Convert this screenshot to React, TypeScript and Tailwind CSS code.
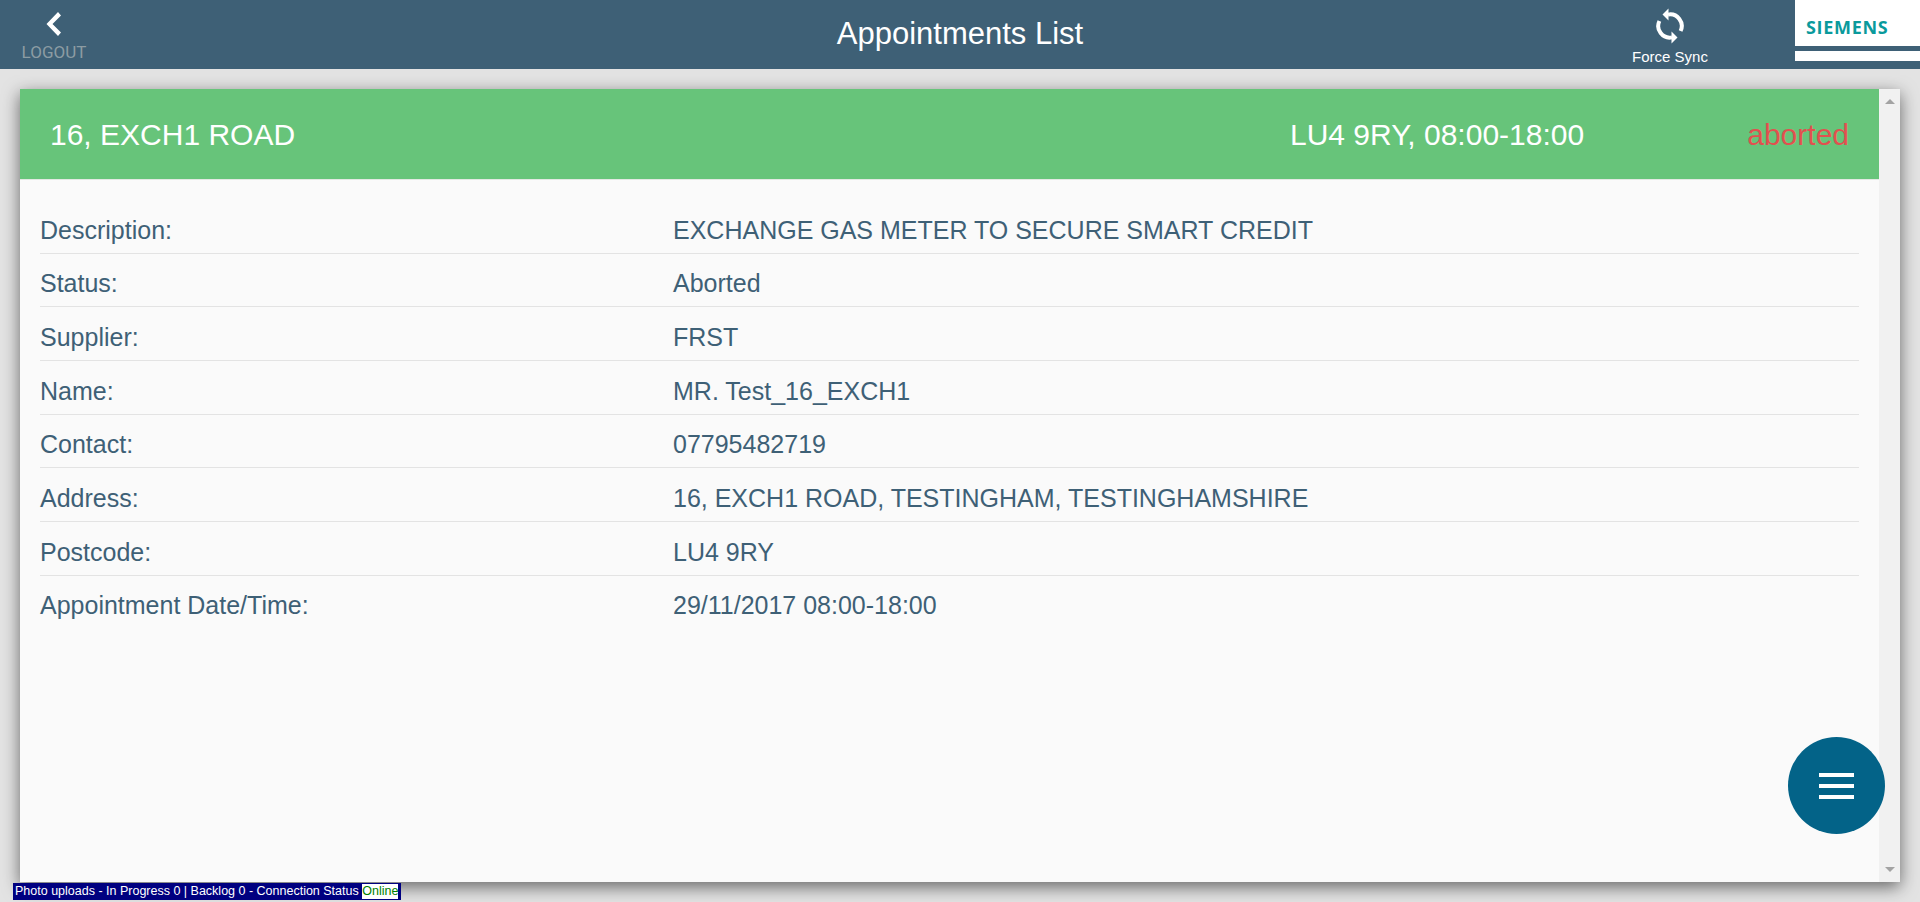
const rows = [
  ["Description:", "EXCHANGE GAS METER TO SECURE SMART CREDIT"],
  ["Status:", "Aborted"],
  ["Supplier:", "FRST"],
  ["Name:", "MR. Test_16_EXCH1"],
  ["Contact:", "07795482719"],
  ["Address:", "16, EXCH1 ROAD, TESTINGHAM, TESTINGHAMSHIRE"],
  ["Postcode:", "LU4 9RY"],
  ["Appointment Date/Time:", "29/11/2017 08:00-18:00"],
];

function SyncIcon() {
  return (
    <svg viewBox="0 0 28 36" className="h-[36px] w-[28px]" fill="none">
      <path d="M12 6.6 A11.6 11.6 0 0 1 24.6 23" stroke="white" strokeWidth="4" />
      <path d="M16 29.4 A11.6 11.6 0 0 1 3.4 13" stroke="white" strokeWidth="4" />
      <path d="M12.5 0.5 L6.5 6.5 L12.5 12.5 Z" fill="white" />
      <path d="M15.5 23.5 L21.5 29.5 L15.5 35.5 Z" fill="white" />
    </svg>
  );
}

function BackIcon() {
  return (
    <svg viewBox="0 0 16 24" className="h-[24px] w-[16px]">
      <path d="M15 3.5 L6.5 12 L15 20.5 L12 24 L0.5 12 L12 0 Z" fill="white" />
    </svg>
  );
}

export default function App() {
  return (
    <div className="relative h-[902px] w-[1920px] overflow-hidden bg-[#e3e3e3] font-['Liberation_Sans',sans-serif]">
      {/* top bar */}
      <div className="flex h-[69px] items-start bg-[#3e6076]">
        <div className="w-[300px]">
          <div className="flex w-[108px] flex-col items-center pt-[12px]">
            <BackIcon />
            <span className="mt-[6px] font-['Roboto',sans-serif] text-[17px] leading-[20px] text-[#8c9ca3]">LOGOUT</span>
          </div>
        </div>
        <div className="flex-1 pt-[16px] text-center text-[31px] leading-[36px] text-white">Appointments List</div>
        <div className="flex w-[300px] justify-between">
          <div className="flex w-[100px] flex-col items-center pt-[8px]">
            <SyncIcon />
            <span className="mt-[4px] text-[15px] leading-[18px] text-white">Force Sync</span>
          </div>
          <div className="flex h-[61px] w-[125px] flex-col bg-white">
            <div className="flex h-[46px] items-center pl-[11px] pt-[8px] font-['Open_Sans',sans-serif] text-[18px] font-bold tracking-[0.7px] text-[#0a9a9c]">SIEMENS</div>
            <div className="h-[5px] bg-[#3e6076]" />
          </div>
        </div>
      </div>

      {/* card */}
      <div className="mx-[20px] mt-[20px] flex h-[793px] shadow-[0_5px_16px_rgba(0,0,0,0.55)]">
        <div className="flex min-w-0 flex-1 flex-col bg-[#fafafa]">
          <div className="flex h-[91px] items-center border-b border-[#e3e8e3] bg-[#67c47a] px-[30px] text-[30px] text-white">
            <span className="w-[1240px]">16, EXCH1 ROAD</span>
            <span className="flex-1">LU4 9RY, 08:00-18:00</span>
            <span className="text-[#e2504f]">aborted</span>
          </div>
          <div className="px-[20px] pt-[20px]">
            {rows.map(([label, value], i) => (
              <div key={label} className={`flex h-[53.7px] items-center border-b pt-[8px] text-[25px] text-[#3e6076] ${i < rows.length - 1 ? "border-[#e3e3e3]" : "border-transparent"}`}>
                <span className="w-[633px]">{label}</span>
                <span>{value}</span>
              </div>
            ))}
          </div>
        </div>
        {/* scrollbar */}
        <div className="flex w-[21px] flex-col items-center justify-between bg-[#f1f1f1] py-[10px]">
          <div className="h-0 w-0 border-x-[5px] border-b-[5px] border-x-transparent border-b-[#a3a3a3]" />
          <div className="h-0 w-0 border-x-[5px] border-t-[5px] border-x-transparent border-t-[#a3a3a3]" />
        </div>
      </div>

      {/* floating menu */}
      <button className="absolute left-[1788px] top-[737px] flex h-[97px] w-[97px] flex-col items-center justify-center gap-[7px] rounded-full bg-[#036388]">
        <span className="h-[4px] w-[35px] bg-white" />
        <span className="h-[4px] w-[35px] bg-white" />
        <span className="h-[4px] w-[35px] bg-white" />
      </button>

      {/* status strip */}
      <div className="absolute left-[13px] top-[883px] flex h-[17px] items-center bg-[#000080] pl-[2px] pr-[3px] text-[12.5px] leading-[15px] text-white">
        <span>Photo uploads - In Progress 0 | Backlog 0 - Connection Status&nbsp;</span>
        <span className="bg-white text-[#008000]">Online</span>
      </div>
    </div>
  );
}
